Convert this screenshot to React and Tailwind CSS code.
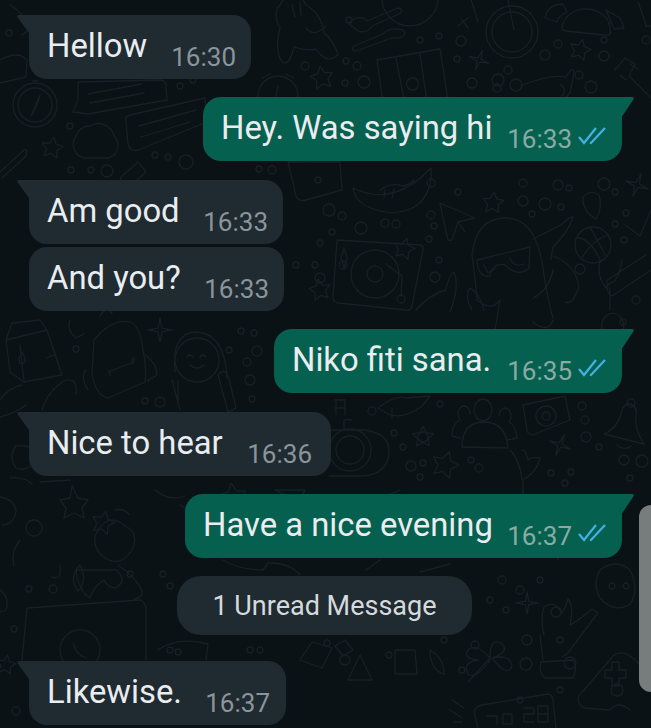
const font = { fontFamily: 'Roboto, sans-serif' };

function Check() {
  return (
    <svg width="30" height="20" viewBox="0 0 30 20" fill="none" stroke="#42b2e4" strokeWidth="2.2" className="ml-[6px] mt-[3px]">
      <path d="M1 11 L6 17 L18 2" />
      <path d="M12 16.5 L13 17 L27 2" />
    </svg>
  );
}

function Tail({ side, color }) {
  if (side === 'left') {
    return (
      <svg width="16" height="22" viewBox="0 0 16 22" className="absolute left-[-13px] top-0">
        <path d="M16 0 H3 Q0 0 2 3 L16 22 Z" fill={color} />
      </svg>
    );
  }
  return (
    <svg width="16" height="24" viewBox="0 0 16 24" className="absolute right-[-13px] top-0">
      <path d="M0 0 H13 Q16 0 14 3 L0 24 Z" fill={color} />
    </svg>
  );
}

function In({ text, time, tail = true, width, mt, pr = 'pr-[15px]' }) {
  return (
    <div className={`relative ml-[29px] flex h-[64px] items-start self-start rounded-[18px] bg-[#1f2a31] pl-[18px] ${tail ? 'rounded-tl-none' : ''} ${mt} ${width}`}>
      {tail && <Tail side="left" color="#1f2a31" />}
      <span className="mt-[10px] text-[32.8px] leading-[42px] text-[#e9edef] whitespace-nowrap">{text}</span>
      <span className={`ml-auto mt-[26px] text-[26px] leading-[32px] text-[#8a959b] whitespace-nowrap ${pr}`}>{time}</span>
    </div>
  );
}

function Out({ text, time, width, mt }) {
  return (
    <div className={`relative mr-[29px] flex h-[64px] items-start self-end rounded-[18px] rounded-tr-none bg-[#06604f] pl-[18px] ${mt} ${width}`}>
      <Tail side="right" color="#06604f" />
      <span className="mt-[10px] text-[32.8px] leading-[42px] text-[#e9edef] whitespace-nowrap">{text}</span>
      <span className="ml-auto mt-[26px] flex pr-[14px] text-[26px] leading-[32px] text-[#8aaba3] whitespace-nowrap">
        {time}
        <Check />
      </span>
    </div>
  );
}

function star(cx, cy, r, rot = 0) {
  let d = '';
  for (let i = 0; i < 10; i++) {
    const rad = i % 2 ? r * 0.5 : r;
    const a = ((i * 36 - 90 + rot) * Math.PI) / 180;
    d += `${i ? 'L' : 'M'}${(cx + rad * Math.cos(a)).toFixed(1)} ${(cy + rad * Math.sin(a)).toFixed(1)} `;
  }
  return d + 'Z';
}

function sparkle(cx, cy, r, rot = 0) {
  let d = '';
  for (let i = 0; i < 8; i++) {
    const rad = i % 2 ? r * 0.22 : r;
    const a = ((i * 45 + rot) * Math.PI) / 180;
    d += `${i ? 'L' : 'M'}${(cx + rad * Math.cos(a)).toFixed(1)} ${(cy + rad * Math.sin(a)).toFixed(1)} `;
  }
  return d + 'Z';
}

const dots = [
  [349, 20, 3], [305, 66, 4], [357, 66, 4], [346, 61, 3], [364, 82, 6], [345, 83, 3], [420, 40, 3], [439, 36, 3], [461, 41, 5],
  [457, 59, 3], [508, 70, 4], [498, 80, 6], [472, 83, 5], [497, 88, 4], [516, 85, 6], [545, 55, 5], [558, 44, 4], [604, 40, 3],
  [604, 56, 5], [579, 75, 4], [591, 87, 6], [646, 40, 4],
  [329, 210, 6], [342, 216, 4], [361, 228, 6], [385, 223, 4], [396, 224, 4], [332, 232, 3], [320, 243, 3], [431, 183, 4],
  [458, 192, 3], [431, 215, 4], [434, 226, 3], [429, 239, 3], [439, 260, 3], [435, 277, 5], [523, 183, 4], [558, 185, 5],
  [569, 188, 3], [523, 201, 5], [545, 204, 6], [561, 207, 3], [532, 214, 3], [604, 184, 6], [615, 192, 3], [626, 213, 3],
  [615, 224, 3], [624, 240, 3], [580, 269, 5], [636, 300, 4], [343, 265, 4], [296, 265, 3], [315, 265, 3], [320, 278, 5],
  [76, 349, 3], [229, 350, 3], [241, 331, 3], [254, 333, 3], [257, 351, 5], [247, 362, 4], [250, 380, 5], [252, 399, 3],
  [145, 401, 3], [160, 402, 5], [394, 433, 3], [403, 447, 3], [411, 466, 5], [423, 463, 3], [420, 477, 3], [471, 460, 3],
  [479, 468, 4], [582, 406, 4], [585, 420, 4], [586, 437, 5], [599, 447, 3], [551, 473, 3], [571, 472, 3], [624, 460, 5],
  [642, 461, 6], [630, 478, 3], [565, 483, 3], [440, 404, 3], [372, 411, 4],
  [502, 580, 4], [490, 600, 3], [520, 590, 4], [506, 610, 3], [540, 580, 3], [556, 612, 5], [527, 640, 5], [444, 640, 3],
  [462, 670, 3], [475, 645, 4], [526, 664, 6], [560, 640, 3], [570, 663, 6], [560, 690, 3], [520, 700, 3],
  [14, 629, 3], [29, 589, 3], [53, 589, 4], [163, 574, 3], [170, 586, 3], [130, 574, 3], [170, 650, 3], [178, 652, 3],
  [250, 650, 3], [260, 650, 3], [16, 711, 4], [327, 643, 3], [389, 655, 3], [345, 660, 5],
  [71, 170, 3], [91, 170, 3], [155, 155, 3], [168, 157, 3], [186, 162, 7], [107, 171, 6], [180, 86, 3], [193, 80, 3], [70, 126, 3],
  [9, 33, 3], [309, 158, 3], [272, 170, 4], [259, 169, 3], [270, 140, 6],
];

function Doodles() {
  return (
    <svg className="absolute inset-0" width="651" height="728" viewBox="0 0 651 728" fill="none" stroke="#172026" strokeWidth="1.3" strokeLinejoin="round" strokeLinecap="round">
      {dots.map(([x, y, r], i) => (
        <circle key={i} cx={x} cy={y} r={r} />
      ))}
      <circle cx="35" cy="105" r="22" />
      <circle cx="35" cy="105" r="17" />
      <path d="M40 95 L31 116 L36 107 Z M33 81 h5" />
      <path d="M78 82 L160 80 Q166 80 166 86 L167 100 L88 114 L73 112 L78 100 Z" />
      <path d="M88 94 L142 84 M90 103 L144 93" />
      <path d="M126 122 Q124 116 130 115 L205 98 L207 122 L138 150 Q130 152 128 144 Z" />
      <path d="M139 126 L196 110 M141 137 L190 122" />
      <path d="M84 158 a14 14 0 0 1 -8 -22 a14 14 0 0 1 14 -10 a16 16 0 0 1 24 10 a13 13 0 0 1 -6 22 Z" />
      <path d={star(52, 148, 11, 10)} />
      <path d="M0 172 L24 150 Q28 148 26 156 L2 178" />
      <path d="M120 178 L138 162 L146 172 L128 188 Z" />
      <path d="M10 5 q14 8 20 24 l-8 6 M0 60 q18 -10 27 0 l-1 17 l-26 6" />
      <path d="M280 5 a14 14 0 0 1 26 0 q15 8 18 28 q10 8 14 22 q-12 10 -22 -6 q-10 2 -22 -2 q-5 20 -12 15 q-8 -12 -2 -34 q-8 -15 0 -23 Z" />
      <path d="M306 28 q8 10 20 -2 M292 5 l3 12 M300 3 l1 12" />
      <path d="M349 24 q5 -8 14 -6 l4 3 L398 8 q5 0 3 5 L372 26 q-5 8 -14 5 Z" />
      <path d="M354 46 L383 34 q5 -6 14 -5 q8 0 8 5 q-3 5 -13 4 l-36 13 q-6 0 -2 -5 Z" />
      <circle cx="512" cy="32" r="26" />
      <circle cx="512" cy="32" r="20" />
      <path d="M508 0 L514 30 M470 -4 L478 22 M462 20 L468 28 M458 26 l10 -8" />
      <circle cx="410" cy="-2" r="28" />
      <path d="M562 28 a24 20 0 0 1 48 2 Q612 36 604 35 L566 31 Q562 30 562 28 Z" />
      <path d="M545 18 q3 -14 18 -14 l4 8 q-8 3 -10 10 Z M606 10 l14 8 l4 10 l-10 1 Z" />
      <path d="M377 60 L440 49 L448 100 L384 110 Z" />
      <path d="M396 58 L405 105 M420 54 L427 102" />
      <path d="M413 78 a6 6 0 1 1 -1 0" />
      <path d={sparkle(479, 60, 10, 20)} />
      <path d={star(580, 50, 11, 15)} />
      <path d={star(322, 78, 12, -10)} />
      <circle cx="278" cy="96" r="20" />
      <path d="M262 78 l8 -4 M294 78 l-8 -4 M278 86 l-2 10" />
      <path d="M520 86 q30 -12 46 -9 q8 -12 8 -4 l-4 20 q-10 12 -14 6 M560 84 q8 6 2 12" />
      <path d="M615 70 l10 -12 l10 6 l-6 12 l14 14 l8 8 M630 64 l8 5 M620 75 l6 5" />
      <path d="M638 2 q6 16 8 24 l5 0" />
      <path d="M353 188 q40 20 78 -20 q2 25 -15 38 q-20 12 -45 2 q-16 -6 -18 -20 Z" />
      <path d="M380 190 q12 -8 22 -4 q8 -1 12 -6 M385 190 l-1 8 M394 189 l-2 9" />
      <path d="M288 162 L340 162 L342 190 L306 200 Q298 202 296 196 Z" />
      <circle cx="318" cy="180" r="3" />
      <path d="M337 240 L420 245 Q424 246 423 250 L412 306 Q411 311 406 310 L338 303 Q333 302 333 297 Z" />
      <circle cx="375" cy="274" r="24" />
      <circle cx="375" cy="274" r="8" />
      <path d="M386 264 L402 276 L401 296" />
      <circle cx="401" cy="299" r="4" />
      <path d="M344 248 l3 10 l-3 10 l-3 -10 Z" />
      <path d={star(404, 249, 11, 15)} />
      <path d={star(320, 290, 11, -10)} />
      <path d={sparkle(637, 185, 12, 20)} />
      <path d={star(493, 203, 11, 5)} />
      <path d="M440 203 L475 218 L458 222 L452 240 Q448 242 447 236 Z M458 222 L465 232" />
      <path d="M583 197 q8 -8 16 -2 q4 12 -3 24 q-14 -8 -13 -22 Z" />
      <path d="M472 255 q4 -37 34 -37 q30 0 37 50 q4 30 10 50 M472 255 q4 30 5 45 q14 12 23 0 M553 320 q-5 14 -20 2 M500 300 l-5 30" />
      <path d="M477 260 L530 247 L529 268 Q518 278 505 265 Q492 262 490 276 Q478 278 477 260 Z" />
      <path d="M484 265 l4 8 l8 -5 M510 258 q4 10 14 6" />
      <path d="M533 239 q20 -10 28 -14 q8 -8 12 -8 q-4 14 -20 30 l-2 12" />
      <path d="M553 256 q22 8 26 30 q-6 20 -14 16 M553 270 q-4 20 -20 28" />
      <path d="M416 310 q14 -16 30 -20 q2 -14 8 -18 q6 14 -4 40 M472 310 q-8 -14 -2 -22 q10 6 14 22" />
      <path d="M600 260 q-4 16 6 28 q3 -6 8 -6 q6 -8 8 -22 M610 288 v22" />
      <circle cx="593" cy="245" r="18" />
      <path d="M577 237 Q592 240 601 262 M608 235 Q592 240 582 258 M590 227 L606 256" />
      <path d="M625 225 L640 236 L651 210 M646 255 L607 280 Q606 294 612 296 L651 270" />
      <path d="M618 315 a11 13 0 1 1 -2 -1 M620 322 a3 3 0 1 1 0 .1" />
      <path d="M6 340 L12 323 L40 320 L47 330 L62 375 L24 382 L10 372 Z M6 340 L47 330 M24 382 L20 345" />
      <path d="M22 352 q-6 10 0 12 q6 -2 0 -12 Z M47 358 l9 -4" />
      <path d="M94 340 q18 -22 36 -18 q10 3 13 28 q4 20 2 32 L108 398 Q96 396 92 374 Z" />
      <path d="M100 316 q6 -10 12 -3 M86 370 q-6 8 2 20 M145 355 q12 8 12 20 l-10 6 M108 372 L134 362 L134 358 M110 376 v-6 M132 364 v-6" />
      <path d={sparkle(160, 330, 12, 0)} />
      <path d="M70 320 q-4 10 6 18 l8 -4" />
      <circle cx="197" cy="360" r="22" />
      <path d="M175 372 q-4 -40 22 -40 q28 2 30 46 M187 357 q3 -4 6 0 M200 357 q3 -4 6 0 M190 365 q7 6 14 0" />
      <path d="M218 375 q8 -10 12 8 l6 25 l-8 4 Z M172 380 l8 30 M178 381 v20" />
      <path d="M26 405 q-10 8 -26 12 M42 410 q6 -20 24 -30 q12 -2 10 14 M0 400 q8 -12 22 -15" />
      <circle cx="350" cy="450" r="14" />
      <circle cx="350" cy="450" r="21" />
      <path d="M331 430 h34 q24 4 24 20 q0 26 -30 26 l-30 0 M344 430 v-9 q0 -2 8 -1 M335 400 h10 M335 408 h10 M336 400 v15 M345 400 v15" />
      <path d="M378 408 q18 -14 28 -10 l24 -2 l-8 10 q-18 14 -34 8 Z M392 408 l0 10" />
      <path d={star(423, 437, 11, 0)} />
      <circle cx="423" cy="437" r="5" />
      <path d="M462 447 q0 -25 22 -25 q22 0 24 26 Z M474 410 a9 11 0 1 0 18 0 a9 11 0 1 0 -18 0" />
      <path d="M470 414 a6 8 0 1 0 -12 0 q0 3 2 6 q-8 4 -8 16 l8 2 M499 416 a6 8 0 1 1 12 0 q0 3 -2 6 q6 2 8 16 l-10 2" />
      <path d="M523 405 L565 396 L570 420 L535 434 Q528 436 527 430 Z" />
      <circle cx="546" cy="416" r="10" />
      <circle cx="546" cy="416" r="4" />
      <path d="M604 434 q14 -6 18 -24 q2 -6 8 -6 q8 2 6 12 q-2 12 8 28 Z" />
      <circle cx="631" cy="403" r="4" />
      <path d="M617 444 a8 6 0 0 0 14 2" />
      <path d={sparkle(560, 445, 11, 22)} />
      <path d={star(445, 465, 14, 18)} />
      <path d="M510 450 q10 10 12 30 q14 -6 18 -22 q-8 -2 -12 2 q-2 -10 -6 -10 M523 480 v14" />
      <path d="M596 497 q16 8 12 30 q-10 10 -20 6" />
      <path d="M558 560 q0 -6 6 -10 M600 570 q-8 14 0 28 q14 16 30 6 q10 -14 0 -34 q-14 -12 -30 0 M612 583 a3 3 0 1 0 .1 0 M626 583 a3 3 0 1 0 .1 0" />
      <path d="M544 635 q-4 -16 0 -28 q10 -8 18 6 q4 -6 6 -14 q6 6 2 26 q8 -4 22 -16 l6 4 q-14 18 -30 40 l-6 4 M541 662 L573 660 Q578 668 573 678 L545 678 Q538 672 541 662 Z M543 660 L540 635" />
      <path d={sparkle(527, 603, 11, 0)} />
      <path d="M490 658 q-14 -16 -22 -8 q-6 8 10 10 q-16 2 -10 14 q8 6 22 -14 M490 658 q0 -22 12 -14 q8 8 -10 14 q18 -4 20 8 q-4 12 -20 -8 M490 658 L468 682" />
      <path d="M584 690 L614 655 Q626 648 640 665 L651 680 M584 690 Q572 700 584 708 L610 710 Q618 700 630 710" />
      <path d="M612 662 h7 v8 h7 v8 h-7 v8 h-7 v-8 h-7 v-8 h7 Z" />
      <circle cx="617" cy="690" r="6" />
      <path d="M474 712 Q476 706 482 705 L548 694 Q552 694 553 700 L556 728 M474 712 L478 728" />
      <path d="M487 716 h10 v8 M503 714 h9 v10 h-9 Z M524 708 h10 v6 h-10 v8 h10 M538 706 h10 v16 h-10 Z M538 714 h10" />
      <path d="M452 700 l12 8 M450 710 l12 8 M454 722 h8" />
      <path d="M27 608 L140 600 Q146 602 146 610 L146 660 M27 608 L22 660" />
      <circle cx="80" cy="650" r="20" />
      <path d="M74 644 q1 10 12 14" />
      <path d="M158 650 q20 -14 50 -6 l-2 16" />
      <path d={star(6, 665, 10, 10)} />
      <path d="M0 590 q10 8 6 20 q-8 4 -6 0 M80 565 q8 16 -2 26 q-10 -14 2 -26 Z" />
      <path d="M60 565 q2 16 -8 12 M76 570 h40 q12 10 0 18 q-8 0 -12 -8 q-10 6 -14 18 q-12 -8 -14 -28 Z" />
      <path d="M118 565 q15 10 22 22 q6 10 -6 12" />
      <path d="M10 478 q14 -2 22 6 M0 497 q14 2 16 14 q-2 14 -14 14 M72 486 l6 12 l10 2 l-6 8 l2 10 l-10 -5 l-10 5 l2 -10 l-6 -8 l10 -2 Z M40 482 l30 -2" />
      <path d="M95 536 q12 -26 30 -10 q14 6 8 22 q-10 18 -24 12 q-16 -8 -14 -24 Z M115 510 q8 -2 14 4" />
      <path d="M20 540 q-10 12 -6 26 M34 520 a8 8 0 1 0 .1 0" />
      <path d="M180 505 l16 10 M155 490 q14 12 30 6" />
      <path d="M40 452 q-12 -8 -24 -6 q-8 10 0 22 q14 6 24 -16 Z" />
      <path d={star(103, 523, 12, 15)} />
      <path d={star(233, 497, 14, -8)} />
      <path d="M275 490 l30 0 q-4 14 -30 0 M300 500 q-10 14 -30 30 M400 490 q-20 10 -40 6" />
      <path d="M223 560 q16 10 40 10 l6 -8 M300 575 q-10 -12 -30 -12 M380 560 l-14 10 M420 572 l30 -8" />
      <path d="M300 660 L312 642 L332 648 L322 668 Z M345 640 l8 10 l-10 6 l-8 -10 Z" />
      <path d="M395 650 h20 l2 24 h-22 Z M360 655 l12 25 h-24 Z M430 650 q14 8 14 24 q-14 -4 -14 -24 Z" />
    </svg>
  );
}

export default function App() {
  return (
    <div className="relative h-[728px] w-[651px] overflow-hidden bg-[#0a1216]" style={font}>
      <Doodles />
      <div className="relative flex flex-col pt-[15px]">
        <In text="Hellow" time="16:30" width="w-[222px]" pr="pr-[15px]" />
        <Out text="Hey. Was saying hi" time="16:33" width="w-[419px]" mt="mt-[18px]" />
        <In text="Am good" time="16:33" width="w-[254px]" mt="mt-[19px]" pr="pr-[15px]" />
        <In text="And you?" time="16:33" width="w-[255px]" tail={false} mt="mt-[3px]" pr="pr-[15px]" />
        <Out text="Niko fiti sana." time="16:35" width="w-[348px]" mt="mt-[18px]" />
        <In text="Nice to hear" time="16:36" width="w-[302px]" mt="mt-[19px]" pr="pr-[19px]" />
        <Out text="Have a nice evening" time="16:37" width="w-[437px]" mt="mt-[18px]" />
        <div className="ml-[177px] mt-[18px] flex h-[59px] w-[295px] items-center justify-center self-start rounded-[24px] bg-[#1f2a31] pt-[2px] text-[27px] text-[#d5dadd]">
          1 Unread Message
        </div>
        <In text="Likewise." time="16:37" width="w-[257px]" mt="mt-[26px]" pr="pr-[16px]" />
      </div>
      <div className="absolute right-0 top-[505px] h-[187px] w-[12px] rounded-l-[12px] bg-[#777c7d]" />
    </div>
  );
}
